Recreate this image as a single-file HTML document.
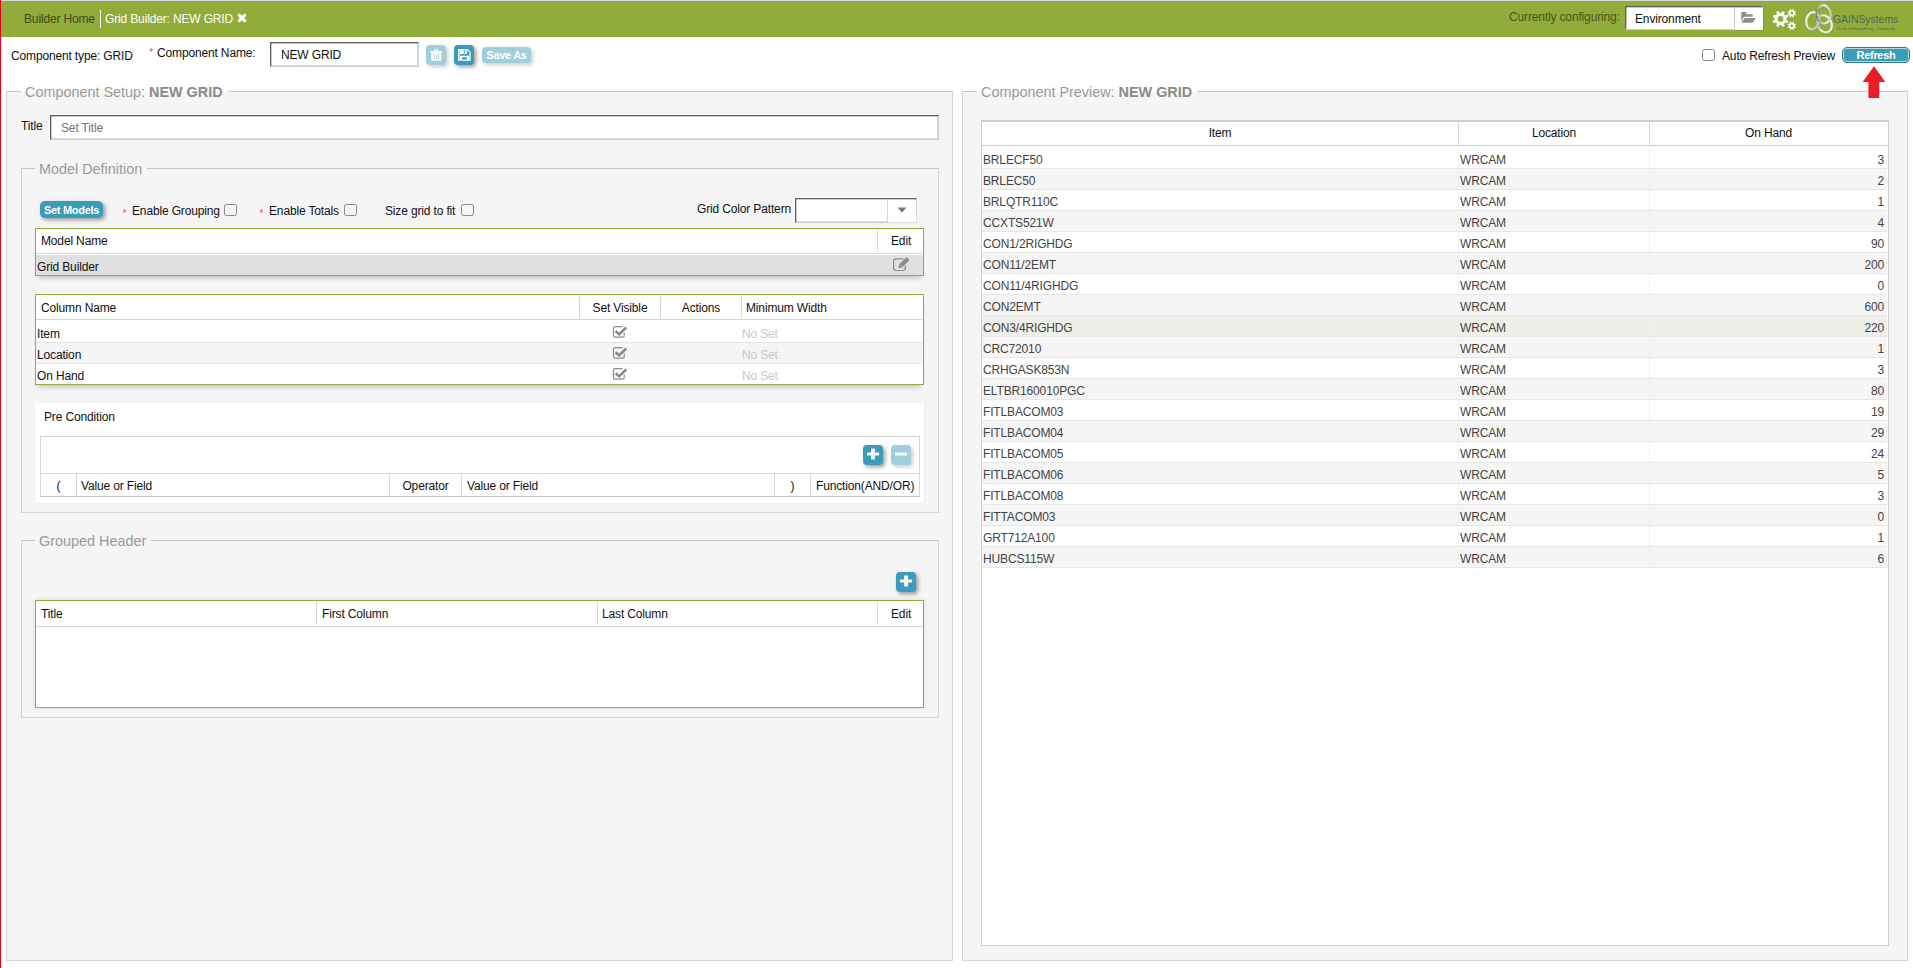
<!DOCTYPE html>
<html><head><meta charset="utf-8"><title>Grid Builder</title>
<style>
*{box-sizing:border-box}
html,body{margin:0;padding:0}
body{width:1913px;height:968px;overflow:hidden;background:#fff;font-family:"Liberation Sans",Arial,sans-serif;font-size:12px;color:#111;position:relative;letter-spacing:-0.15px}
.a{position:absolute;white-space:nowrap}
.topline{left:0;top:0;width:1913px;height:1px;background:#d9d9e3}
.redline{left:0;top:0;width:1px;height:968px;background:#e2001a}
.bar{left:1px;top:1px;width:1912px;height:36px;background:#91ac38}
.t{line-height:14px;height:14px}
.c{text-align:center}
.r{text-align:right}
.fs{border:1px solid;border-color:#c6c6c6 #d5d5d5 #d5d5d5 #d0d0d0;background:#f5f5f5}
.lg{font-size:14.4px;line-height:18px;height:18px;color:#999;background:linear-gradient(#fff 50%,#f5f5f5 50%);padding:0 5px 0 4px;letter-spacing:0}
.lg b{color:#8a8a8a}
.lg2{background:#f5f5f5}
.inp{background:#fff;border:1px solid;border-color:#5e5e60 #cdcdcd #cdcdcd #5e5e60;box-shadow:inset 0 1px 0 rgba(94,94,96,.32),inset 1px 0 0 rgba(94,94,96,.32),inset 0 -1px 0 #dcdcdc,inset -1px 0 0 #dcdcdc,-1px -1px 0 rgba(255,255,255,.7)}
.btn{letter-spacing:-.3px;background:#3a9cb8;border-radius:4px;box-shadow:2px 2px 4px rgba(0,0,0,.4);color:#fff;font-weight:bold;font-size:11px;text-align:center}
.btn.dis{background:#9fcfdd;box-shadow:2px 2px 4px rgba(0,0,0,.2)}
.inp.nh{box-shadow:inset 0 1px 0 rgba(94,94,96,.32),inset 1px 0 0 rgba(94,94,96,.32)}
.cb{width:13px;height:12px;border:1px solid #878787;border-radius:2.5px;background:transparent}
.grid{border:1px solid #93ad3c;background:#fff;box-shadow:0 5px 5px -3px rgba(0,0,0,.22)}
.hl{background:#d6d6d6;height:1px}
.vl{background:#d6d6d6;width:1px}
.red{color:#ec5560;font-size:10px}
.g{color:#444}
.ns{color:#c8c8c8}
</style></head><body>
<div class="a bar"></div><div class="a topline"></div><div class="a redline"></div>
<div class="a t" style="left:24px;top:12px;color:#3f4b16">Builder Home</div>
<div class="a" style="left:100px;top:10px;width:1px;height:18px;background:#fff"></div>
<div class="a t" style="left:105px;top:12px;color:#fff">Grid Builder: NEW GRID</div>
<svg class="a" style="left:237px;top:12.6px" width="10" height="10" viewBox="0 0 10 10"><path d="M1.4 1.4 L8.6 8.6 M8.6 1.4 L1.4 8.6" stroke="#fff" stroke-width="3" stroke-linecap="butt"/></svg>
<div class="a t" style="left:1509px;top:10px;color:#4a571b">Currently configuring:</div>
<div class="a inp nh" style="left:1625px;top:6px;width:138px;height:24px"></div>
<div class="a vl" style="left:1734px;top:8px;height:20px;background:#c8c8c8"></div>
<div class="a t" style="left:1635px;top:12px;color:#111">Environment</div>
<div class="a" style="left:1735px;top:8px;width:28px;height:22px;background:#fff;box-shadow:1px 1px 0 rgba(0,0,0,.13)"></div>
<svg class="a" style="left:1741px;top:12px" width="16" height="12" viewBox="0 0 16 12"><path d="M0.2 0.9 Q0.2 0.1 1 0.1 H4.6 Q5.5 0.1 5.5 1 V2.2 H10.9 Q11.7 2.2 11.7 3 V4.7 H3.9 Q3 4.7 2.5 5.6 L0.2 9.8 Z" fill="#8f8f8f"/><path d="M0.5 10.8 L3.2 6.5 Q3.5 6 4.2 6 H14.9 L12 10.3 Q11.6 10.8 11 10.8 Z" fill="#8f8f8f"/></svg>

<svg class="a" style="left:1771px;top:7px" width="28" height="26" viewBox="0 0 28 26"><path fill="#fff" fill-rule="evenodd" d="M15.43 12.94 L17.38 13.89 L16.41 16.23 L14.35 15.53 L13.03 16.85 L13.73 18.91 L11.39 19.88 L10.44 17.93 L8.56 17.93 L7.61 19.88 L5.27 18.91 L5.97 16.85 L4.65 15.53 L2.59 16.23 L1.62 13.89 L3.57 12.94 L3.57 11.06 L1.62 10.11 L2.59 7.77 L4.65 8.47 L5.97 7.15 L5.27 5.09 L7.61 4.12 L8.56 6.07 L10.44 6.07 L11.39 4.12 L13.73 5.09 L13.03 7.15 L14.35 8.47 L16.41 7.77 L17.38 10.11 L15.43 11.06 Z M12.40 12.00 A2.9 2.9 0 1 0 6.60 12.00 A2.9 2.9 0 1 0 12.40 12.00 Z M23.86 6.68 L25.08 7.23 L24.55 8.50 L23.31 8.02 L22.62 8.71 L23.10 9.95 L21.83 10.48 L21.28 9.26 L20.32 9.26 L19.77 10.48 L18.50 9.95 L18.98 8.71 L18.29 8.02 L17.05 8.50 L16.52 7.23 L17.74 6.68 L17.74 5.72 L16.52 5.17 L17.05 3.90 L18.29 4.38 L18.98 3.69 L18.50 2.45 L19.77 1.92 L20.32 3.14 L21.28 3.14 L21.83 1.92 L23.10 2.45 L22.62 3.69 L23.31 4.38 L24.55 3.90 L25.08 5.17 L23.86 5.72 Z M22.20 6.20 A1.4 1.4 0 1 0 19.40 6.20 A1.4 1.4 0 1 0 22.20 6.20 Z M23.86 19.28 L25.08 19.83 L24.55 21.10 L23.31 20.62 L22.62 21.31 L23.10 22.55 L21.83 23.08 L21.28 21.86 L20.32 21.86 L19.77 23.08 L18.50 22.55 L18.98 21.31 L18.29 20.62 L17.05 21.10 L16.52 19.83 L17.74 19.28 L17.74 18.32 L16.52 17.77 L17.05 16.50 L18.29 16.98 L18.98 16.29 L18.50 15.05 L19.77 14.52 L20.32 15.74 L21.28 15.74 L21.83 14.52 L23.10 15.05 L22.62 16.29 L23.31 16.98 L24.55 16.50 L25.08 17.77 L23.86 18.32 Z M22.20 18.80 A1.4 1.4 0 1 0 19.40 18.80 A1.4 1.4 0 1 0 22.20 18.80 Z"/></svg>
<svg class="a" style="left:1803px;top:2px" width="100" height="34" viewBox="0 0 100 34">
<defs><linearGradient id="rg" x1="0" y1="0" x2="1" y2="1"><stop offset="0" stop-color="#fafafa"/><stop offset=".55" stop-color="#e4e5e5"/><stop offset="1" stop-color="#b8baba"/></linearGradient>
<linearGradient id="rg2" x1="0" y1="0" x2="1" y2="0"><stop offset="0" stop-color="#7f8283"/><stop offset=".3" stop-color="#c9cbcb"/><stop offset=".7" stop-color="#f1f1f1"/><stop offset="1" stop-color="#c4c6c6"/></linearGradient>
<linearGradient id="rg3" x1="0" y1="0" x2="1" y2="1"><stop offset="0" stop-color="#8d9091"/><stop offset=".4" stop-color="#e9e9e9"/><stop offset="1" stop-color="#f3f3f3"/></linearGradient></defs>
<g fill="none" stroke-width="2.1">
<ellipse cx="9.6" cy="18.7" rx="6.3" ry="8.6" transform="rotate(12 9.6 18.7)" stroke="url(#rg)"/>
<ellipse cx="21.4" cy="21.7" rx="6.9" ry="9" transform="rotate(-28 21.4 21.7)" stroke="url(#rg3)"/>
<ellipse cx="20.6" cy="12.3" rx="7.1" ry="9.2" transform="rotate(-8 20.6 12.3)" stroke="url(#rg2)"/>
</g>
<text x="30" y="21.2" font-family="Liberation Sans, sans-serif" font-size="10.4" letter-spacing="0" fill="#2a3f80" fill-opacity=".68">GAINSystems</text>
<text x="33.5" y="28.2" font-family="Liberation Sans, sans-serif" font-size="4.3" letter-spacing="0" fill="#3e5170" fill-opacity=".8">Think of Everything...Optimally</text>
</svg>
<div class="a t" style="left:11px;top:49px">Component type: GRID</div>
<div class="a red" style="left:149px;top:46px;font-size:11px">*</div>
<div class="a t" style="left:157px;top:46px">Component Name:</div>
<div class="a inp" style="left:270px;top:42px;width:149px;height:25px"></div>
<div class="a t" style="left:281px;top:48px">NEW GRID</div>
<div class="a btn dis" style="left:426px;top:45px;width:20px;height:20px"></div>
<svg class="a" style="left:430px;top:49px" width="13" height="12" viewBox="0 0 13 12"><path d="M4.3 2 V1.3 Q4.3 .3 5.3 .3 H7.3 Q8.3 .3 8.3 1.3 V2 H7.3 V1.3 H5.3 V2 Z M0.2 2 H12.4 V3.2 H0.2 Z M1.2 3.2 H11.4 V10.7 Q11.4 11.8 10.3 11.8 H2.3 Q1.2 11.8 1.2 10.7 Z" fill="#fff"/><path d="M4.1 4.6 V10.2 M6.3 4.6 V10.2 M8.5 4.6 V10.2" stroke="#9fcfdd" stroke-width=".8"/></svg>
<div class="a btn" style="left:454px;top:45px;width:20px;height:20px"></div>
<svg class="a" style="left:458px;top:49px" width="13" height="12" viewBox="0 0 13 12"><path d="M0 0 H9.6 L12.6 3 V11.8 H0 Z" fill="#fff"/><g fill="#3a9cb8"><rect x="1.9" y="5" width="9" height="1.7"/><rect x="4.1" y="8.2" width="4.7" height="2.4"/><rect x="5.7" y="1.3" width="1.4" height="2.6"/><path d="M8.9 1.3 H9.3 L11.1 3.2 V5 H8.9 Z"/><rect x="1.3" y="1.2" width=".6" height="9.6" opacity=".6"/><rect x="10.9" y="3.4" width=".6" height="7.4" opacity=".6"/></g></svg>
<div class="a btn dis" style="left:482px;top:47px;width:49px;height:16px;line-height:16px">Save As</div>
<div class="a cb" style="left:1702px;top:49px"></div>
<div class="a t" style="left:1722px;top:49px">Auto Refresh Preview</div>
<div class="a btn" style="left:1842px;top:47px;width:68px;height:16px;line-height:15px;box-shadow:inset 0 0 0 1px rgba(238,234,215,.75);border:1px solid #2f7a90;border-radius:5px">Refresh</div>

<div class="a fs" style="left:6px;top:91px;width:947px;height:870px"></div>
<div class="a lg" style="left:21px;top:83px">Component Setup: <b>NEW GRID</b></div>
<div class="a t" style="left:21px;top:119px">Title</div>
<div class="a inp" style="left:50px;top:115px;width:889px;height:25px"></div>
<div class="a t" style="left:61px;top:121px;color:#757575">Set Title</div>
<div class="a fs" style="left:21px;top:168px;width:918px;height:345px"></div>
<div class="a lg lg2" style="left:35px;top:160px">Model Definition</div>

<div class="a btn" style="left:40px;top:201px;width:63px;height:17px;line-height:18px;border-radius:5px">Set Models</div>
<div class="a red" style="left:122.5px;top:208px">*</div>
<div class="a t" style="left:132px;top:204px">Enable Grouping</div>
<div class="a cb" style="left:224px;top:204px"></div>
<div class="a red" style="left:259.5px;top:208px">*</div>
<div class="a t" style="left:269px;top:204px">Enable Totals</div>
<div class="a cb" style="left:344px;top:204px"></div>
<div class="a t" style="left:385px;top:204px">Size grid to fit</div>
<div class="a cb" style="left:461px;top:204px"></div>
<div class="a t" style="left:697px;top:202px">Grid Color Pattern</div>
<div class="a inp" style="left:795px;top:198px;width:122px;height:25px;"></div>
<div class="a" style="left:888px;top:200px;width:29px;height:23px;background:#fff;border-right:1px solid #dcdcdc;border-bottom:1px solid #dcdcdc"></div>
<div class="a vl" style="left:887px;top:200px;height:22px"></div>
<svg class="a" style="left:897px;top:207px" width="10" height="6" viewBox="0 0 10 6"><path d="M0.5 0.5 H9.5 L5 5.5 Z" fill="#777"/></svg>

<div class="a grid" style="left:35px;top:228px;width:889px;height:48px"></div>
<div class="a" style="left:36px;top:255px;width:887px;height:20px;background:#e0e0e0"></div>
<div class="a hl" style="left:36px;top:253px;width:887px"></div>
<div class="a vl" style="left:877px;top:230px;height:22px"></div>
<div class="a t" style="left:41px;top:234px">Model Name</div>
<div class="a t" style="left:891px;top:234px">Edit</div>
<div class="a t" style="left:37px;top:260px">Grid Builder</div>
<svg class="a" style="left:892px;top:256px" width="19" height="16" viewBox="0 0 19 16"><path d="M11.6 2.9 H4 Q1.6 2.9 1.6 5.3 V12.1 Q1.6 14.5 4 14.5 H11 Q13.4 14.5 13.4 12.1 V9.6" fill="none" stroke="#8c8c8c" stroke-width="1.2"/><path d="M6.4 11.9 L7.1 8.5 L13.9 1.7 Q14.6 1 15.3 1.7 L16.9 3.3 Q17.6 4 16.9 4.7 L10.1 11.5 Z" fill="#8a8a8a"/><path d="M7.9 8.9 L9.6 10.6" stroke="#e0e0e0" stroke-width=".7"/></svg>

<div class="a grid" style="left:35px;top:294px;width:889px;height:91px"></div>
<div class="a" style="left:36px;top:343px;width:887px;height:20px;background:#f5f5f5"></div>
<div class="a hl" style="left:36px;top:319px;width:887px"></div>
<div class="a hl" style="left:36px;top:342px;width:885px;background:#e4e4e4"></div>
<div class="a hl" style="left:36px;top:363px;width:885px;background:#e4e4e4"></div>
<div class="a vl" style="left:579px;top:296px;height:22px"></div>
<div class="a vl" style="left:660px;top:296px;height:22px"></div>
<div class="a vl" style="left:741px;top:296px;height:22px"></div>
<div class="a t" style="left:41px;top:301px">Column Name</div>
<div class="a t c" style="left:580px;top:301px;width:80px">Set Visible</div>
<div class="a t c" style="left:661px;top:301px;width:80px">Actions</div>
<div class="a t" style="left:746px;top:301px">Minimum Width</div>

<div class="a t" style="left:37px;top:327px">Item</div>
<svg class="a" style="left:612px;top:325px" width="16" height="14" viewBox="0 0 16 14"><path d="M12.2 7.6 V10.6 Q12.2 12.2 10.6 12.2 H3.1 Q1.5 12.2 1.5 10.6 V3.2 Q1.5 1.6 3.1 1.6 H10.6" fill="none" stroke="#8c8c8c" stroke-width="1.2"/><path d="M3.6 6.3 L7.1 9.4 L14.3 2.3" fill="none" stroke="#878787" stroke-width="2.5"/></svg>
<div class="a t ns" style="left:742px;top:327px">No Set</div>
<div class="a t" style="left:37px;top:348px">Location</div>
<svg class="a" style="left:612px;top:346px" width="16" height="14" viewBox="0 0 16 14"><path d="M12.2 7.6 V10.6 Q12.2 12.2 10.6 12.2 H3.1 Q1.5 12.2 1.5 10.6 V3.2 Q1.5 1.6 3.1 1.6 H10.6" fill="none" stroke="#8c8c8c" stroke-width="1.2"/><path d="M3.6 6.3 L7.1 9.4 L14.3 2.3" fill="none" stroke="#878787" stroke-width="2.5"/></svg>
<div class="a t ns" style="left:742px;top:348px">No Set</div>
<div class="a t" style="left:37px;top:369px">On Hand</div>
<svg class="a" style="left:612px;top:367px" width="16" height="14" viewBox="0 0 16 14"><path d="M12.2 7.6 V10.6 Q12.2 12.2 10.6 12.2 H3.1 Q1.5 12.2 1.5 10.6 V3.2 Q1.5 1.6 3.1 1.6 H10.6" fill="none" stroke="#8c8c8c" stroke-width="1.2"/><path d="M3.6 6.3 L7.1 9.4 L14.3 2.3" fill="none" stroke="#878787" stroke-width="2.5"/></svg>
<div class="a t ns" style="left:742px;top:369px">No Set</div>
<div class="a" style="left:35px;top:403px;width:889px;height:100px;background:#fff;box-shadow:0 0 3px rgba(0,0,0,.06)"></div>
<div class="a t" style="left:44px;top:410px">Pre Condition</div>
<div class="a" style="left:40px;top:436px;width:880px;height:61px;border:1px solid #d6d6d6;border-bottom-color:#c4c4c4;background:#fff"></div>
<div class="a hl" style="left:41px;top:473px;width:878px"></div>
<div class="a vl" style="left:76px;top:474px;height:22px"></div>
<div class="a vl" style="left:389px;top:474px;height:22px"></div>
<div class="a vl" style="left:461px;top:474px;height:22px"></div>
<div class="a vl" style="left:774px;top:474px;height:22px"></div>
<div class="a vl" style="left:810px;top:474px;height:22px"></div>
<div class="a t c" style="left:41px;top:479px;width:35px">(</div>
<div class="a t" style="left:81px;top:479px">Value or Field</div>
<div class="a t c" style="left:390px;top:479px;width:71px">Operator</div>
<div class="a t" style="left:467px;top:479px">Value or Field</div>
<div class="a t c" style="left:775px;top:479px;width:35px">)</div>
<div class="a t" style="left:816px;top:479px">Function(AND/OR)</div>
<div class="a btn" style="left:863px;top:445px;width:20px;height:20px"></div>
<svg class="a" style="left:867px;top:448px" width="13" height="12" viewBox="0 0 13 12"><path d="M0 4.4 H4.1 V.5 H8.1 V4.4 H12.1 V7.6 H8.1 V11.4 H4.1 V7.6 H0 Z" fill="#f6f6f6"/></svg>
<div class="a btn dis" style="left:891px;top:445px;width:20px;height:20px"></div>
<svg class="a" style="left:895px;top:448px" width="13" height="12" viewBox="0 0 13 12"><rect x="0" y="4.5" width="12.1" height="3.1" fill="#f6f6f6"/></svg>

<div class="a fs" style="left:21px;top:540px;width:918px;height:178px"></div>
<div class="a lg lg2" style="left:35px;top:532px">Grouped Header</div>
<div class="a btn" style="left:896px;top:572px;width:20px;height:20px"></div>
<svg class="a" style="left:900px;top:575px" width="13" height="12" viewBox="0 0 13 12"><path d="M0 4.4 H4.1 V.5 H8.1 V4.4 H12.1 V7.6 H8.1 V11.4 H4.1 V7.6 H0 Z" fill="#f6f6f6"/></svg>
<div class="a grid" style="left:35px;top:600px;width:889px;height:108px;box-shadow:0 0 4px rgba(0,0,0,.12)"></div>
<div class="a hl" style="left:36px;top:626px;width:887px"></div>
<div class="a vl" style="left:316px;top:602px;height:22px"></div>
<div class="a vl" style="left:597px;top:602px;height:22px"></div>
<div class="a vl" style="left:877px;top:602px;height:22px"></div>
<div class="a t" style="left:41px;top:607px">Title</div>
<div class="a t" style="left:322px;top:607px">First Column</div>
<div class="a t" style="left:602px;top:607px">Last Column</div>
<div class="a t" style="left:891px;top:607px">Edit</div>

<div class="a fs" style="left:962px;top:91px;width:946px;height:870px"></div>
<div class="a lg" style="left:977px;top:83px">Component Preview: <b>NEW GRID</b></div>
<div class="a" style="left:981px;top:120px;width:908px;height:826px;border:1px solid #d0d0d0;border-top:2px solid #cecece;background:#fff"></div>
<div class="a hl" style="left:982px;top:145px;width:906px;background:#ccc"></div>
<div class="a vl" style="left:1458px;top:123px;height:21px"></div>
<div class="a vl" style="left:1649px;top:123px;height:21px"></div>
<div class="a t c" style="left:982px;top:126px;width:476px">Item</div>
<div class="a t c" style="left:1459px;top:126px;width:190px">Location</div>
<div class="a t c" style="left:1650px;top:126px;width:237px">On Hand</div>

<div class="a" style="left:982px;top:148px;width:905px;height:21px;background:#fff;border-bottom:1px solid #e6e6e6"></div>
<div class="a t g" style="left:983px;top:153px">BRLECF50</div>
<div class="a t g" style="left:1460px;top:153px">WRCAM</div>
<div class="a t g r" style="left:1700px;top:153px;width:184px">3</div>
<div class="a" style="left:982px;top:169px;width:905px;height:21px;background:#f5f5f5;border-bottom:1px solid #e6e6e6"></div>
<div class="a t g" style="left:983px;top:174px">BRLEC50</div>
<div class="a t g" style="left:1460px;top:174px">WRCAM</div>
<div class="a t g r" style="left:1700px;top:174px;width:184px">2</div>
<div class="a" style="left:982px;top:190px;width:905px;height:21px;background:#fff;border-bottom:1px solid #e6e6e6"></div>
<div class="a t g" style="left:983px;top:195px">BRLQTR110C</div>
<div class="a t g" style="left:1460px;top:195px">WRCAM</div>
<div class="a t g r" style="left:1700px;top:195px;width:184px">1</div>
<div class="a" style="left:982px;top:211px;width:905px;height:21px;background:#f5f5f5;border-bottom:1px solid #e6e6e6"></div>
<div class="a t g" style="left:983px;top:216px">CCXTS521W</div>
<div class="a t g" style="left:1460px;top:216px">WRCAM</div>
<div class="a t g r" style="left:1700px;top:216px;width:184px">4</div>
<div class="a" style="left:982px;top:232px;width:905px;height:21px;background:#fff;border-bottom:1px solid #e6e6e6"></div>
<div class="a t g" style="left:983px;top:237px">CON1/2RIGHDG</div>
<div class="a t g" style="left:1460px;top:237px">WRCAM</div>
<div class="a t g r" style="left:1700px;top:237px;width:184px">90</div>
<div class="a" style="left:982px;top:253px;width:905px;height:21px;background:#f5f5f5;border-bottom:1px solid #e6e6e6"></div>
<div class="a t g" style="left:983px;top:258px">CON11/2EMT</div>
<div class="a t g" style="left:1460px;top:258px">WRCAM</div>
<div class="a t g r" style="left:1700px;top:258px;width:184px">200</div>
<div class="a" style="left:982px;top:274px;width:905px;height:21px;background:#fff;border-bottom:1px solid #e6e6e6"></div>
<div class="a t g" style="left:983px;top:279px">CON11/4RIGHDG</div>
<div class="a t g" style="left:1460px;top:279px">WRCAM</div>
<div class="a t g r" style="left:1700px;top:279px;width:184px">0</div>
<div class="a" style="left:982px;top:295px;width:905px;height:21px;background:#f5f5f5;border-bottom:1px solid #e6e6e6"></div>
<div class="a t g" style="left:983px;top:300px">CON2EMT</div>
<div class="a t g" style="left:1460px;top:300px">WRCAM</div>
<div class="a t g r" style="left:1700px;top:300px;width:184px">600</div>
<div class="a" style="left:982px;top:316px;width:905px;height:21px;background:#eeefe8;border-bottom:1px solid #e6e6e6"></div>
<div class="a t g" style="left:983px;top:321px">CON3/4RIGHDG</div>
<div class="a t g" style="left:1460px;top:321px">WRCAM</div>
<div class="a t g r" style="left:1700px;top:321px;width:184px">220</div>
<div class="a" style="left:982px;top:337px;width:905px;height:21px;background:#f5f5f5;border-bottom:1px solid #e6e6e6"></div>
<div class="a t g" style="left:983px;top:342px">CRC72010</div>
<div class="a t g" style="left:1460px;top:342px">WRCAM</div>
<div class="a t g r" style="left:1700px;top:342px;width:184px">1</div>
<div class="a" style="left:982px;top:358px;width:905px;height:21px;background:#fff;border-bottom:1px solid #e6e6e6"></div>
<div class="a t g" style="left:983px;top:363px">CRHGASK853N</div>
<div class="a t g" style="left:1460px;top:363px">WRCAM</div>
<div class="a t g r" style="left:1700px;top:363px;width:184px">3</div>
<div class="a" style="left:982px;top:379px;width:905px;height:21px;background:#f5f5f5;border-bottom:1px solid #e6e6e6"></div>
<div class="a t g" style="left:983px;top:384px">ELTBR160010PGC</div>
<div class="a t g" style="left:1460px;top:384px">WRCAM</div>
<div class="a t g r" style="left:1700px;top:384px;width:184px">80</div>
<div class="a" style="left:982px;top:400px;width:905px;height:21px;background:#fff;border-bottom:1px solid #e6e6e6"></div>
<div class="a t g" style="left:983px;top:405px">FITLBACOM03</div>
<div class="a t g" style="left:1460px;top:405px">WRCAM</div>
<div class="a t g r" style="left:1700px;top:405px;width:184px">19</div>
<div class="a" style="left:982px;top:421px;width:905px;height:21px;background:#f5f5f5;border-bottom:1px solid #e6e6e6"></div>
<div class="a t g" style="left:983px;top:426px">FITLBACOM04</div>
<div class="a t g" style="left:1460px;top:426px">WRCAM</div>
<div class="a t g r" style="left:1700px;top:426px;width:184px">29</div>
<div class="a" style="left:982px;top:442px;width:905px;height:21px;background:#fff;border-bottom:1px solid #e6e6e6"></div>
<div class="a t g" style="left:983px;top:447px">FITLBACOM05</div>
<div class="a t g" style="left:1460px;top:447px">WRCAM</div>
<div class="a t g r" style="left:1700px;top:447px;width:184px">24</div>
<div class="a" style="left:982px;top:463px;width:905px;height:21px;background:#f5f5f5;border-bottom:1px solid #e6e6e6"></div>
<div class="a t g" style="left:983px;top:468px">FITLBACOM06</div>
<div class="a t g" style="left:1460px;top:468px">WRCAM</div>
<div class="a t g r" style="left:1700px;top:468px;width:184px">5</div>
<div class="a" style="left:982px;top:484px;width:905px;height:21px;background:#fff;border-bottom:1px solid #e6e6e6"></div>
<div class="a t g" style="left:983px;top:489px">FITLBACOM08</div>
<div class="a t g" style="left:1460px;top:489px">WRCAM</div>
<div class="a t g r" style="left:1700px;top:489px;width:184px">3</div>
<div class="a" style="left:982px;top:505px;width:905px;height:21px;background:#f5f5f5;border-bottom:1px solid #e6e6e6"></div>
<div class="a t g" style="left:983px;top:510px">FITTACOM03</div>
<div class="a t g" style="left:1460px;top:510px">WRCAM</div>
<div class="a t g r" style="left:1700px;top:510px;width:184px">0</div>
<div class="a" style="left:982px;top:526px;width:905px;height:21px;background:#fff;border-bottom:1px solid #e6e6e6"></div>
<div class="a t g" style="left:983px;top:531px">GRT712A100</div>
<div class="a t g" style="left:1460px;top:531px">WRCAM</div>
<div class="a t g r" style="left:1700px;top:531px;width:184px">1</div>
<div class="a" style="left:982px;top:547px;width:905px;height:21px;background:#f5f5f5;border-bottom:1px solid #e6e6e6"></div>
<div class="a t g" style="left:983px;top:552px">HUBCS115W</div>
<div class="a t g" style="left:1460px;top:552px">WRCAM</div>
<div class="a t g r" style="left:1700px;top:552px;width:184px">6</div>
<div class="a" style="left:1458px;top:148px;width:1px;height:420px;background:#f0f0f0"></div>
<div class="a" style="left:1649px;top:148px;width:1px;height:420px;background:#f0f0f0"></div>
<svg class="a" style="left:1861px;top:66px" width="26" height="33" viewBox="0 0 26 33"><path d="M13 0.3 L24.4 16 H18.2 V32 H7.4 V16 H1.6 Z" fill="#ec1c24"/></svg>
</body></html>
